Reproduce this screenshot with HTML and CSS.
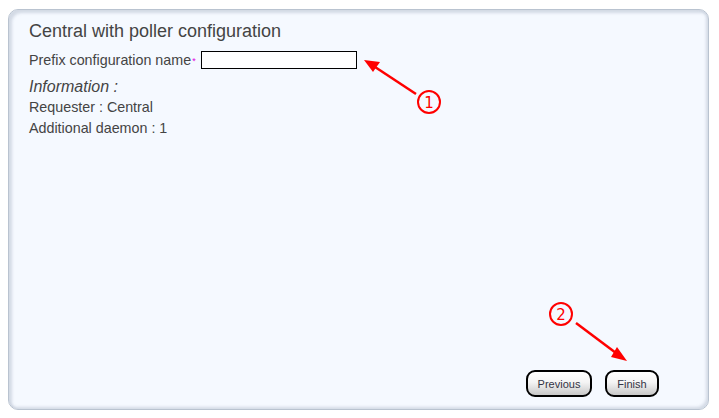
FILE: index.html
```html
<!DOCTYPE html>
<html>
<head>
<meta charset="utf-8">
<link rel="stylesheet" href="styles.css">
</head>
<body>
<div class="panel">
  <h1 class="title">Central with poller configuration</h1>
  <div class="field">
    <label class="label">Prefix configuration name<span class="req">*</span></label>
    <input class="input" type="text">
  </div>
  <div class="info-head">Information :</div>
  <div class="line">Requester : Central</div>
  <div class="line">Additional daemon : 1</div>
  <div class="spacer"></div>
  <div class="buttons">
    <button class="btn btn-prev">Previous</button>
    <button class="btn btn-finish">Finish</button>
  </div>
</div>
<svg class="annot" width="719" height="418" viewBox="0 0 719 418">
  <g stroke="#f00" fill="none" stroke-width="2">
    <line x1="416" y1="94" x2="372" y2="65" stroke-width="2.5"/>
    <circle cx="429" cy="102" r="11"/>
    <line x1="576" y1="323" x2="620" y2="356" stroke-width="2.5"/>
    <circle cx="561" cy="314" r="11"/>
  </g>
  <polygon points="364,60 380,62 373,72" fill="#f00"/>
  <polygon points="627,361 617,347 611,357" fill="#f00"/>
  <text x="429" y="108" class="num">1</text>
  <text x="561" y="320" class="num">2</text>
</svg>
</body>
</html>
```
FILE: styles.css
```css
html, body {
  margin: 0;
  padding: 0;
  background: #ffffff;
}
body {
  width: 719px;
  height: 418px;
  position: relative;
  font-family: "Liberation Sans", Arial, sans-serif;
  color: #444;
}
.panel {
  position: absolute;
  left: 8px;
  top: 9px;
  width: 701px;
  height: 401px;
  box-sizing: border-box;
  border: 1px solid #b9c3d0;
  border-radius: 10px;
  background: #f5f9ff;
  box-shadow: inset 3px 3px 3px rgba(150,160,180,0.35), inset -2px -2px 3px rgba(150,160,180,0.35);
  padding: 10px 20px 12px 20px;
  display: flex;
  flex-direction: column;
}
.title {
  margin: 0;
  font-size: 18px;
  font-weight: normal;
  line-height: 22px;
  color: #444;
}
.field {
  display: flex;
  align-items: center;
  margin-top: 8px;
  height: 20px;
}
.label {
  font-size: 14.3px;
  color: #444;
}
.req {
  color: #e000e0;
  font-size: 9px;
  vertical-align: 1px;
  margin-left: 1px;
}
.input {
  margin: 0 0 0 5px;
  width: 156px;
  height: 18px;
  box-sizing: border-box;
  border: 1px solid #000;
  background: #fff;
  padding: 0;
}
.info-head {
  font-style: italic;
  font-size: 16px;
  line-height: 20px;
  margin-top: 7px;
  color: #444;
}
.line {
  font-size: 14.3px;
  line-height: 21px;
  color: #444;
}
.spacer {
  flex: 1;
}
.buttons {
  display: flex;
  justify-content: flex-end;
  gap: 13px;
  padding-right: 29px;
}
.btn {
  height: 27px;
  box-sizing: border-box;
  border: 2px solid #000;
  border-radius: 9px;
  background: linear-gradient(#ffffff 0%, #f4f4f4 45%, #c8c8c8 100%);
  font-family: "Liberation Sans", Arial, sans-serif;
  font-size: 11px;
  color: #334;
  padding: 0;
}
.btn-prev { width: 66px; }
.btn-finish { width: 54px; }
.annot {
  position: absolute;
  left: 0;
  top: 0;
  pointer-events: none;
}
.num {
  fill: #f00;
  font-family: "DejaVu Sans", sans-serif;
  font-size: 15px;
  text-anchor: middle;
}
```
